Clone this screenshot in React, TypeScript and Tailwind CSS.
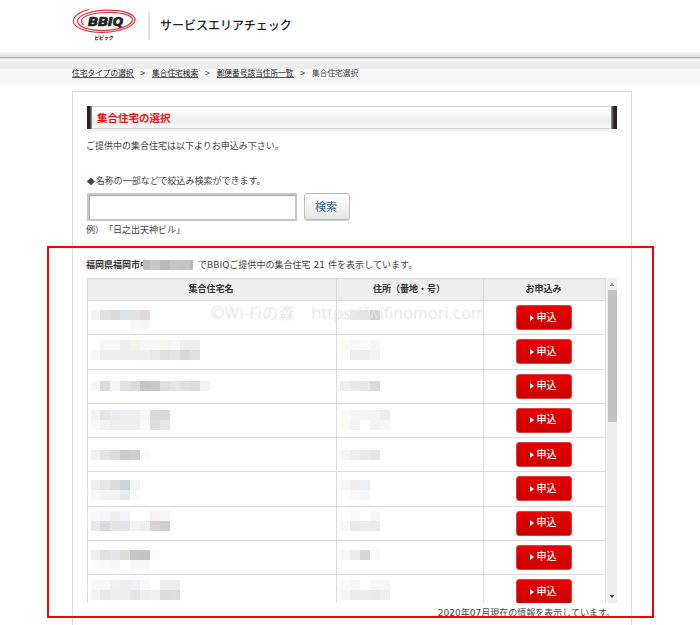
import type { ReactNode } from "react";

type Mosaic = { top: number; cells: string[] };

// each string is a line of 10px blocks, "-" leaves a gap
const rows: { name: Mosaic; address: Mosaic }[] = [
  {
    name: { top: 9, cells: ["f4f4f2 e0e0e0 dadada dde3e7 e2e2e2 e0d9dc", "- - - - f7f7f7 faf5f5"] },
    address: { top: 9, cells: ["f9f9f9 e9e9e9 e4e4e4 d4d4d4"] },
  },
  {
    name: { top: 5, cells: ["- f7f7f7 f7f7f7 eeeef2 f3f3ed f7f7f7 f7f7f7 f6f6ee f7f7f7 eeeeee eeeeee", "f7f7f7 eeeeee eeeeee eeeeee eeeeee eeeeee e4eae9 dfdfdf e4e2e5 d9d7dc dfdfdf"] },
    address: { top: 5, cells: ["fbfaf5 f7f7f7 fafafa f7f7f7", "fafaf7 eeeeee eeeeee f4f4f4"] },
  },
  {
    name: { top: 11, cells: ["f7f7f7 dcdcdc f5f5f7 e3e3e3 dcdcdc cbc3ca c8c8c8 e0e0e0 e5e7e7 e0e0e0 dcdcdc f4f4f4"] },
    address: { top: 11, cells: ["f0edef e6e9ee e4e8ec dddadb"] },
  },
  {
    name: { top: 6, cells: ["f7f3f1 e6e6e6 ebebf2 eeeeee eeeeee f7f7f7 dbdbd8 d9d9d9", "faf9fa f3f3f3 eeeeee eeeeee eeeeee f9f9fc dddddd e6e8e8"] },
    address: { top: 6, cells: ["fbfbf4 f5f7f7 f4f6f5 f3f4f3 eeeeee", "fbfbf5 f2f3f6 - f2f3f3 f7f7f7"] },
  },
  {
    name: { top: 12, cells: ["f3f1ef e0e4e7 dcdcdc cbcbcb cecece f9fcfc"] },
    address: { top: 12, cells: ["f6f6f6 eeeeee e8e8e8 e5e5e5"] },
  },
  {
    name: { top: 8, cells: ["eeeeee e5e5e5 dcdcdc cdd2d3 f3f5f2", "fcf7f7 f3f3f1 f4f4f4 e6eaec fbfbfb"] },
    address: { top: 8, cells: ["f6f6f6 eeeeee eaf1f4", "- fcf7fc f7f7f7"] },
  },
  {
    name: { top: 4, cells: ["faf8fc f6f6f6 eeeeee f3f3f8 - - f5f2f3 f7f7f7", "e9e7eb dadada e5e5e5 e5e3e7 f1f1f6 eeeeee d8d3d9 cecece"] },
    address: { top: 4, cells: ["- f9f9f9 - f7f7f7", "f7f7f7 e9e9e9 ececef ebebed"] },
  },
  {
    name: { top: 9, cells: ["efedea e0e0e0 e7e5e7 dcddd9 c6c6c6 c4c4c4 fafdfd", "fbfcfd fafafc f7f7f7 - f7f7f7 f7f7f7"] },
    address: { top: 9, cells: ["f7f7f7 ececf0 d7d5d7 f7fcfa"] },
  },
  {
    name: { top: 5, cells: ["faf7f8 f7f7f7 f1eff4 eeeeee eff0f5 faf9fa - eeeeee eeeeee", "f8f1ed e7e9ed eeeeee eeeeee e5e5e5 eeeeee f0eff1 dddbdf dddddd"] },
    address: { top: 5, cells: ["fbf9f7 f6f6f6 - f5f8fa f7f7f7", "f5f5f8 ebebeb ebecec e7ecea eeeeee"] },
  },
];

function MosaicText({ data, narrow }: { data: Mosaic; narrow?: boolean }) {
  return (
    <div style={{ paddingTop: data.top }}>
      {data.cells.map((line, i) => (
        <div key={i} className="flex">
          {line.split(" ").map((c, j) => (
            <span
              key={j}
              className={narrow && j === 0 ? "h-[10px] w-[9px]" : "h-[10px] w-[10px]"}
              style={{ backgroundColor: c === "-" ? "transparent" : `#${c}` }}
            />
          ))}
        </div>
      ))}
    </div>
  );
}

function Logo() {
  return (
    <svg width="66" height="36" viewBox="0 0 66 36" className="shrink-0">
      <g fill="none" stroke="#e5333a" strokeWidth="1.200">
        <path d="M17 2.500C9 4 1 9 1.300 14.500C2 21 15 25.700 31 25.300C48 25 62.500 19.500 63 13C63.500 6.500 50 3 35 3.200C19 3.500 6 8 5.500 14C5 20 18 23.800 32 23.500C48 23 60.500 18 60.500 12.500C60 7.500 47 5 34 5.500C21 6 10 9 9.500 13.500C9.300 15 10 16.500 11.500 18" />
      </g>
      <text x="16" y="19.300" textLength="35" lengthAdjust="spacingAndGlyphs" fill="#222" stroke="#222" strokeWidth=".5" fontSize="13" fontWeight="900" fontStyle="italic" fontFamily="Roboto, 'Liberation Sans', sans-serif">
        BBIQ
      </text>
      <text x="29" y="33" transform="skewX(-12)" textLength="19" lengthAdjust="spacingAndGlyphs" fill="#333" fontSize="5.500" fontWeight="900" fontFamily="'Noto Sans CJK JP', sans-serif">
        ビビック
      </text>
    </svg>
  );
}

function Crumb({ children }: { children: ReactNode }) {
  return (
    <>
      <a className="h-[9px] border-b border-[#555] text-[#222]">{children}</a>
      <span className="w-[18.5px] text-center text-[9px]">&gt;</span>
    </>
  );
}

function ApplyButton() {
  return (
    <button className="flex h-[25px] w-[56px] items-center justify-center gap-[3px] rounded-[3px] border border-[#dc4040] bg-linear-to-b from-[#e60000] to-[#cc0000] pr-[2px] text-[10px] font-medium leading-none text-white">
      <svg width="4" height="6" viewBox="0 0 4 6">
        <path d="M0 0L4 3L0 6Z" fill="#fff" />
      </svg>
      申込
    </button>
  );
}

export default function App() {
  return (
    <div className="relative h-[625px] w-[700px] overflow-hidden bg-white font-['DejaVu_Sans','Noto_Sans_CJK_JP',sans-serif] text-[9px] leading-[12px] text-[#444] [text-spacing-trim:space-all]">
      {/* Header */}
      <header className="flex h-[52px] items-start pl-[72px] pt-[7px]">
        <Logo />
        <div className="ml-[10px] mt-[5px] h-[28px] w-[2px] bg-[#e4e4e4]" />
        <h1 className="ml-[10px] mt-[9px] font-['Noto_Sans_CJK_JP',sans-serif] text-[12px] font-medium leading-[18px] text-[#222]">
          サービスエリアチェック
        </h1>
      </header>
      <div className="h-[5px] bg-linear-to-b from-[#f7f7f7] to-[#e0e0e0]" />
      <div className="h-[1px] bg-[#b8b8b8]" />
      <div className="h-[1px] bg-[#d9d9d9]" />
      <div className="h-[2px] bg-[#f7f7f7]" />
      <div className="h-[8px] bg-[#eeeeee]" />

      {/* Breadcrumb */}
      <nav className="flex h-[17px] items-start bg-linear-to-b from-[#f6f6f6] from-75% to-white pl-[72px] font-['Noto_Sans_CJK_JP',sans-serif] text-[7.7px] leading-[8px]">
        <Crumb>住宅タイプの選択</Crumb>
        <Crumb>集合住宅検索</Crumb>
        <Crumb>郵便番号該当住所一覧</Crumb>
        <span>集合住宅選択</span>
      </nav>

      <main className="ml-[72px] mt-[5px] h-[560px] w-[560px] border border-[#dcdcdc] px-[14px] pt-[14px]">
        <div className="flex h-[23px] w-[530px] items-center border-y border-[#d3d3d3] bg-linear-to-b from-white via-[#eeeeee] via-70% to-[#f9f9f9] shadow-[0_3px_4px_#eeeeee]">
          <div className="h-[23px] w-[5px] bg-linear-to-r from-[#292427] from-50% to-[#999]" />
          <h2 className="grow pl-[5px] font-['Noto_Sans_CJK_JP',sans-serif] text-[10.5px] font-bold text-[#f01010]">
            集合住宅の選択
          </h2>
          <div className="h-[23px] w-[6px] bg-linear-to-l from-[#292427] from-50% to-[#999]" />
        </div>

        <p className="-ml-px mt-[11px]">ご提供中の集合住宅は以下よりお申込み下さい。</p>
        <p className="mt-[23px]">
          <span className="mr-[1px] text-[10px]">◆</span>名称の一部などで絞込み検索ができます。
        </p>

        <div className="mt-[6px] flex gap-[7px]">
          <input className="h-[28px] w-[210px] border-[2px] border-[#c6c6c6] bg-white shadow-[inset_1px_1px_0_#a9a9a9]" />
          <button className="h-[27px] w-[46px] rounded-[3px] border border-[#bdbdbd] bg-linear-to-b from-white to-[#e6e6e6] pr-[2px] pt-[2px] text-[11px] text-[#32669b] shadow-[0_1px_0_#d0d0d0]">
            検索
          </button>
        </div>
        <p className="-ml-px mt-[3px]">例）「日之出天神ビル」</p>

        <p className="mt-[23px] flex whitespace-nowrap">
          <b className="-ml-px w-[57px] text-[#333]">福岡県福岡市中</b>
          <span className="relative mt-px flex h-[10px]">
            <i className="w-[7px] bg-[#bcbcbc]" />
            <i className="w-[10px] bg-[#c8c8c8]" />
            <i className="w-[10px] bg-[#b9b9b9]" />
            <i className="w-[10px] bg-[#c5c5c8]" />
            <i className="w-[10px] bg-[#c1c5c8]" />
            <i className="w-[3px] bg-[#b4bdb4]" />
          </span>
          <span className="ml-[5px] tracking-[0.04px]">でBBIQご提供中の集合住宅 21 件を表示しています。</span>
        </p>

        {/* Table */}
        <div className="mt-[7px] flex h-[325px] w-[531px] overflow-hidden">
          <div className="w-[519px] shrink-0 border-l border-[#dcdcdc]">
            <div className="grid h-[23px] grid-cols-[249px_147px_122px] border-y border-[#d9d9d9] bg-[#eeeeee] text-center font-bold leading-[20px] text-[#333]">
              <div className="border-r border-[#d9d9d9] pr-[2px]">集合住宅名</div>
              <div className="border-r border-[#d9d9d9] pr-[2px]">住所（番地・号）</div>
              <div className="border-r border-[#d9d9d9] pr-[2px]">お申込み</div>
            </div>
            {rows.map((row, i) => (
              <div key={i} className="grid h-[34.25px] grid-cols-[249px_147px_122px] border-b border-[#dcdcdc]">
                <div className="border-r border-[#dcdcdc] pl-[3px]">
                  <MosaicText data={row.name} narrow />
                </div>
                <div className="border-r border-[#dcdcdc] pl-[3px]">
                  <MosaicText data={row.address} />
                </div>
                <div className="flex justify-center border-r border-[#dcdcdc] pr-px pt-[4px]">
                  <ApplyButton />
                </div>
              </div>
            ))}
          </div>
          <div className="ml-[1px] flex w-[10px] flex-col items-center bg-[#eeeeee]">
            <svg width="6" height="12" viewBox="0 0 6 12" className="shrink-0">
              <path d="M.5 8L3 5L5.500 8Z" fill="#888" />
            </svg>
            <div className="h-[132px] w-[9px] bg-[#c1c1c1]" />
            <svg width="6" height="12" viewBox="0 0 6 12" className="mt-auto">
              <path d="M.5 4L3 7L5.500 4Z" fill="#333" />
            </svg>
          </div>
        </div>
        <p className="mt-[4px] pr-[2px] text-right">2020年07月現在の情報を表示しています。</p>
      </main>

      {/* Watermark */}
      <div className="absolute left-[211px] top-[303px] whitespace-pre font-['Open_Sans','Noto_Sans_CJK_JP',sans-serif] text-[16px] font-light leading-[20px] tracking-[0.53px] text-white/70 [text-shadow:0_0_1px_#c4c4c4]">
        ©Wi-Fiの森　https://wifinomori.com
      </div>
      <div className="absolute left-[47px] top-[246px] h-[372px] w-[607px] border-2 border-[#ff0000]" />
    </div>
  );
}
